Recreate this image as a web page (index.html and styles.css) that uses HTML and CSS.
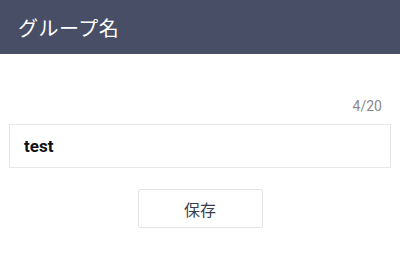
FILE: index.html
```html
<!DOCTYPE html>
<html lang="ja">
<head>
<meta charset="utf-8">
<link rel="stylesheet" href="styles.css">
</head>
<body>
<header class="header"><h1 class="title">グループ名</h1></header>
<main class="content">
  <div class="counter">4/20</div>
  <div class="field">test</div>
  <div class="actions"><button class="save">保存</button></div>
</main>
</body>
</html>
```
FILE: styles.css
```css
html, body { margin: 0; padding: 0; background: #fff; }
body { width: 400px; height: 271px; overflow: hidden; font-family: Roboto, "Noto Sans CJK JP", sans-serif; }
.header { height: 54px; background: #474e66; display: flex; align-items: center; padding-left: 18px; box-sizing: border-box; }
.title { margin: 0; font-size: 20px; font-weight: 400; color: #fff; font-family: "Noto Sans CJK JP", sans-serif; letter-spacing: 0.5px; }
.content { padding: 44px 9px 0 9px; }
.counter { text-align: right; font-size: 14px; color: #8a8a8a; padding-right: 9px; line-height: 16px; }
.field { margin-top: 10px; height: 44px; box-sizing: border-box; border: 1px solid #e6e6e6; display: flex; align-items: center; padding-left: 14px; font-size: 17px; font-weight: 700; color: #111; }
.actions { display: flex; justify-content: center; margin-top: 21px; }
.save { width: 125px; height: 39px; background: #fff; border: 1px solid #e4e4e4; border-radius: 2px; font-family: "Noto Sans CJK JP", sans-serif; font-size: 16px; color: #3a3f4e; padding: 0; }
```
